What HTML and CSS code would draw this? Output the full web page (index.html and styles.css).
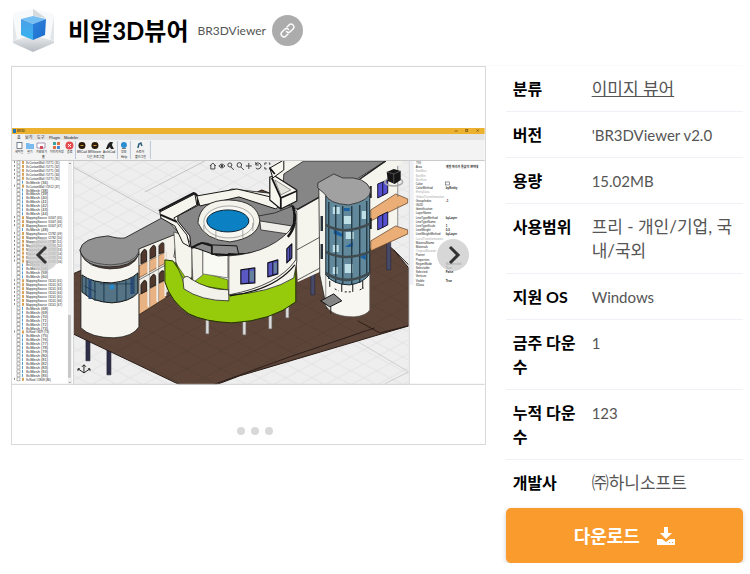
FILE: index.html
```html
<!DOCTYPE html>
<html lang="ko">

<head>
    <meta charset="UTF-8" />
    <meta name="viewport" content="width=device-width, initial-scale=1.0" />
    <title>비알3D뷰어</title>
    <link rel="stylesheet" href="styles.css">
</head>

<body>
    <header class="app-header">
        <svg class="app-icon" viewBox="0 0 44 44" aria-hidden="true">
            <defs>
                <linearGradient id="cubeLeft" x1="0" y1="0" x2="0" y2="1">
                    <stop offset="0" stop-color="#4b9fe8" />
                    <stop offset="1" stop-color="#36b4f0" />
                </linearGradient>
                <linearGradient id="cubeRight" x1="0" y1="0" x2="1" y2="1">
                    <stop offset="0" stop-color="#2e83dd" />
                    <stop offset="1" stop-color="#1b6ccb" />
                </linearGradient>
                <linearGradient id="base" x1="0" y1="0" x2="0" y2="1">
                    <stop offset="0" stop-color="#eceff1" />
                    <stop offset="1" stop-color="#b4bac0" />
                </linearGradient>
            </defs>
            <path d="M1 4 21 0v28L1 32zM21 0l21 5v27L21 27z" fill="#f8f9fa" />
            <path d="M21 0v7l13 2z" fill="#d5dadf" />
            <path d="M1 9v23l4-2zM42 8v24l-4-2z" fill="#e3e6e9" />
            <path d="M1 32 21 26l21 6v2L21 43 1 34z" fill="url(#base)" />
            <path d="M9 10 21 7l13 3-13 5z" fill="#75bff3" />
            <path d="M9 10l12 5v16L9 26z" fill="url(#cubeLeft)" />
            <path d="M34 10 21 15v16l12-5z" fill="url(#cubeRight)" />
        </svg>
        <h1>비알3D뷰어</h1>
        <span class="app-subtitle">BR3DViewer</span>
        <a class="link-button" href="#" aria-label="링크">
            <svg viewBox="0 0 24 24" aria-hidden="true">
                <g transform="rotate(-45 12 12)">
                    <path d="M9 16H5a4 4 0 0 1 0-8h5a4 4 0 0 1 4 4" />
                    <path d="M15 8h4a4 4 0 0 1 0 8h-5a4 4 0 0 1-4-4" />
                </g>
            </svg>
        </a>
    </header>

    <main class="content">
        <div class="slider">
            <svg class="slide" viewBox="12 128 473 257" role="img" aria-label="BR3DViewer 화면">
                <defs>
                    <pattern id="grid" width="26" height="14" patternUnits="userSpaceOnUse">
                        <path d="M0 0 26 14M0 14 26 0" stroke="#dcdcdc" stroke-width=".6" />
                    </pattern>
                    <pattern id="groundGrid" width="34" height="18" patternUnits="userSpaceOnUse">
                        <path d="M0 0 34 18M0 18 34 0" stroke="#4c3a31" stroke-width=".5" />
                    </pattern>
                    <clipPath id="viewport">
                        <rect x="73" y="161" width="336" height="224" />
                    </clipPath>
                </defs>

                <!-- window -->
                <rect x="12" y="128" width="473" height="257" fill="#fff" />
                <rect x="12" y="128" width="473" height="6" fill="#ebb12f" />
                <rect x="13" y="129" width="3" height="4" fill="#2277b5" />
                <text x="17" y="132">BR3D</text>
                <path d="M455 131h3M466 129.500h2v2h-2zM477 129.500l2 2m0-2-2 2" stroke="#5b4413" stroke-width=".7" fill="none" />
                <rect x="12" y="134" width="473" height="6" fill="#e4e4e4" />
                <rect x="12" y="140" width="473" height="21" fill="#f3f3f3" />
                <rect x="12" y="134" width="13" height="7" fill="#f3f3f3" />
                <path d="M12 160.500h473" stroke="#c9c9c9" />
                <g>
                    <text class="menu" x="17" y="139">홈</text>
                    <text class="menu" x="25" y="139">보기</text>
                    <text class="menu" x="37" y="139">도구</text>
                    <text class="menu" x="49" y="139">Plugin</text>
                    <text class="menu" x="64" y="139">Modeler</text>
                    <text x="15" y="153">새파일</text>
                    <text x="27" y="153">열기</text>
                    <text x="36" y="153">가져오기</text>
                    <text x="50" y="153">이미지저장</text>
                    <text x="67" y="153">종료</text>
                    <text x="77" y="153">BRCad</text>
                    <text x="88" y="153">BRViewer</text>
                    <text x="103" y="153">ArchiCad</text>
                    <text x="121" y="153">정보</text>
                    <text x="136" y="153">스토어</text>
                    <text x="42" y="158">홈</text>
                    <text x="87" y="158">다른 프로그램</text>
                    <text x="121" y="158">Help</text>
                    <text x="135" y="158">플러그인</text>
                </g>
                <path d="M75.500 141v18M117.500 141v18M130.500 141v18M150.500 141v18" stroke="#b9c6da" />
                <rect x="17" y="142.500" width="5" height="6" fill="#fff" stroke="#586678" stroke-width=".8" />
                <path d="M26 143h3l1 1h4v5h-8z" fill="#79baf0" />
                <path d="M37 143h8v5h-8z" fill="#fff" stroke="#947aa0" stroke-width=".8" />
                <path d="M40 146h3v3h-3z" fill="#d04e5d" />
                <path d="M53 142h3v3h-3z" fill="#35a3a1" />
                <path d="M57 142h3v3h-3zM53 146h3v3h-3z" fill="#dd703e" />
                <path d="M57 146h3v3h-3z" fill="#4988d0" />
                <circle cx="69.500" cy="145.500" r="4" fill="#e4494d" />
                <path d="M68 144l3 3m0-3-3 3" stroke="#fff" />
                <circle cx="82" cy="145.500" r="3.500" fill="#2b1b0a" />
                <circle cx="95" cy="145.500" r="3.500" fill="#2b1b0a" />
                <path d="M80.500 145.500h3M93.500 145.500h3" stroke="#d79c44" />
                <path d="M106 149l2-5 2-2h3l-1 3 2 4h-3l-1-2-2 2z" fill="#222" />
                <circle cx="124" cy="145" r="3" fill="#2b8ed0" />
                <path d="M122 148.500h4" stroke="#777" />
                <path d="M138 148l1-4 2-1 1 3" fill="none" stroke="#2c5d77" stroke-width="1.500" />

                <!-- tree and property panes, filled by panes.js -->
                <g id="tree"></g>
                <rect x="68" y="161" width="4" height="223" fill="#f0f0f0" />
                <rect x="68" y="315" width="3" height="63" fill="#c8c8c8" />
                <path d="M69 164l1-1 1 1M69 382l1 1 1-1" stroke="#555" stroke-width=".6" fill="none" />
                <rect x="409" y="161" width="5" height="124" fill="#eef0f6" />
                <g id="props"></g>

                <!-- 3d viewport -->
                <g clip-path="url(#viewport)" stroke-linejoin="round">
                    <rect x="73" y="161" width="336" height="224" fill="#eee" />
                    <rect x="73" y="161" width="336" height="224" fill="url(#grid)" />
                    <path d="M73 167 160 215M145 192 205 161" stroke="#aaa" stroke-width=".6" />
                    <path d="M355 340 409 372M385 384 409 372" stroke="#bbb" stroke-width=".6" />

                    <!-- ground -->
                    <path d="M86 334h4v27h-4zM107 346h4v29h-4z" fill="#2e2e49" stroke="#1b1b2a" stroke-width=".6" />
                    <path d="M73 274 150 240 262 190 380 238 394 250 409 268V326L240 376 216 385H180L73 334z" fill="#5c4438" stroke="#251914" />
                    <path d="M73 274 150 240 262 190 380 238 394 250 409 268V326L240 376 216 385H180L73 334z" fill="url(#groundGrid)" />
                    <path d="M213 385 290 357 375 328M358 321 380 333 409 326" fill="none" stroke="#231713" stroke-width=".8" />
                    <path d="M394 250 409 265" stroke="#231713" />
                    <path d="M311 273h4v22h-4zM387 235h4v35h-4z" fill="#474a69" stroke="#25263c" stroke-width=".6" />

                    <!-- rear wing -->
                    <path d="M270 167 284 157H409L398 166V233L368 250 298 282 293 208z" fill="#f6f5ed" />
                    <path d="M298 280 326 265M297 250 326 234" stroke="#333" stroke-width=".8" />
                    <path d="M284 174 304 161H386L354 181 320 197 298 209 282 205z" fill="#868686" stroke="#222" stroke-width=".8" />
                    <path d="M386 161 356 182M320 197 297 210" stroke="#222" stroke-width="1.500" />
                    <path d="M371 210 396 194 408 199V203L371 221z" fill="#eaae76" stroke="#5b3b22" stroke-width=".7" />
                    <path d="M371 241 396 226 408 230V234L371 251z" fill="#eaae76" stroke="#5b3b22" stroke-width=".7" />
                    <path d="M398 166V197M398 206V227" stroke="#777" stroke-width=".8" />
                    <path d="M378 184l10-4v13l-10 5zM378 217l10-5v13l-10 5z" fill="#5550cf" stroke="#15152d" />
                    <path d="M383 182v14M383 214v14" stroke="#15152d" />
                    <path d="M371 186v12M371 218v11" stroke="#222" stroke-width="2" />

                    <!-- arcade -->
                    <path d="M139 246 176 228V285L139 315z" fill="#f3f1e9" />
                    <path d="M139 266 166 252V263L139 278zM139 295 166 280V298L139 315z" fill="#e9b282" stroke="#5b3b22" stroke-width=".6" />
                    <path d="M141 264v-10q4-8 6-2v9zM150 259v-9q4-8 6-2v8zM159 254v-8q4-6 6-1v7zM141 294v-9q4-8 6-2v8zM150 288v-9q4-8 6-2v8zM159 283v-9q4-6 6-1v7z" fill="#52382c" stroke="#111" stroke-width=".8" />
                    <path d="M148.500 250v57M157.500 246v56M165.500 240v56" stroke="#efeee8" stroke-width="2" />
                    <path d="M149.800 250v57M158.800 246v56" stroke="#777" stroke-width=".5" />
                    <path d="M139 280 166 265M139 315 172 294" stroke="#222" stroke-width=".6" />

                    <!-- gray walkway and left tower -->
                    <path d="M80 250Q82 238 108 236 119 239 125 238L162 218 177 227 179 233 139 249V255Q131 267 110 267 83 267 80 250z" fill="#929292" stroke="#222" stroke-width=".9" />
                    <path d="M81 254V328Q91 338 114 338 133 337 139 327V254Q134 269 110 269 87 268 81 254z" fill="#f6f5ef" stroke="#222" stroke-width=".8" />
                    <path d="M82 275Q92 283 112 283 130 281 138 273V293Q130 302 112 303 92 302 82 292z" fill="#547486" stroke="#111" />
                    <path d="M86 278v17M95 281v20M104 283v19M117 283v19M126 281v19M134 276v18" stroke="#1b354b" stroke-width="1" />
                    <path d="M90 279v20M132 278v16" stroke="#294b79" stroke-width="3" />
                    <path d="M100 284h32M84 286l12 6" stroke="#182c38" stroke-width=".6" />
                    <circle cx="112" cy="287" r="2.500" fill="#2388cc" />
                    <path d="M80 250Q83 264 111 265 134 264 139 252" fill="none" stroke="#333" stroke-width=".7" />

                    <!-- main round building -->
                    <path d="M206 320h3v14h-3zM243 320h3v15h-3zM269 315h3v14h-3zM286 304h3v14h-3z" fill="#ddd" stroke="#777" stroke-width=".5" />
                    <path d="M165 260 173 261 184 277 228 287 262 281 296 266V302Q272 321 232 323 205 322 189 314 171 302 165 282z" fill="#96cb0b" stroke="#223300" />
                    <path d="M160 212 196 193 201 203 232 189 285 195 297 212V262L294 278Q270 293 230 295L174 257 178 232z" fill="#f6f5ed" stroke="#222" stroke-width=".8" />
                    <path d="M174 232 186 236 192 245V277L184 283 176 262z" fill="#f6f5ed" stroke="#333" stroke-width=".7" />
                    <path d="M175 262 183 278 192 282 201 272 228 280V290L190 284z" fill="#96cb0b" stroke="#223300" stroke-width=".6" />
                    <path d="M192 249 203 244V275L193 283z" fill="#f4f3eb" stroke="#444" stroke-width=".7" />
                    <path d="M203 245 228 250V278L203 274z" fill="#fafaf5" stroke="#555" stroke-width=".7" />
                    <path d="M183 279Q187 274 191 279 208 290 229 290V301Q201 301 184 289z" fill="#f3f2ea" stroke="#222" stroke-width=".8" />
                    <path d="M178 216 199 205 230 195 279 205 293 206Q297 226 287 236 271 250 246 254 225 255 206 250L191 247 190 236 178 221z" fill="#868686" stroke="#111" />
                    <path d="M160 212 195 194 197 205 174 218 176 221 187 235 190 247 183 243 175 226 161 218z" fill="#f6f5ed" stroke="#171717" stroke-width="1" />
                    <path d="M159 211 194 193 198 196V205M161 215 177 222" fill="none" stroke="#171717" stroke-width="2" />
                    <path d="M197 196 237 189 275 198 283 202 276 209 239 197 200 206z" fill="#f6f5ed" stroke="#171717" stroke-width="1" />
                    <path d="M193 247Q202 240 212 245L237 246 239 255 218 256z" fill="#8c8c8c" stroke="#111" />
                    <path d="M191 248 202 243 212 246V254L228 255M228 254Q264 257 289 237" fill="none" stroke="#171717" stroke-width="1.800" />
                    <path d="M198 223Q200 200 229 200 258 201 260 221 258 238 230 242 205 240 198 223z" fill="#f4f3eb" stroke="#222" stroke-width=".9" />
                    <ellipse cx="229" cy="222" rx="25" ry="16" fill="#f8f7f1" stroke="#777" stroke-width=".6" />
                    <ellipse cx="228" cy="221" rx="21" ry="11" fill="#0b80c2" stroke="#0a2434" />
                    <path d="M204 225v8M216 231v9M243 230v8M253 223v8" stroke="#888" stroke-width=".7" />
                    <path d="M260 221 292 226 288 234 261 230z" fill="#efeee8" stroke="#222" stroke-width=".8" />
                    <path d="M259 216 275 213 293 206" fill="none" stroke="#222" stroke-width=".8" />
                    <path d="M229 256Q275 253 296 223V260Q278 286 229 295z" fill="#f6f5ed" stroke="#222" stroke-width=".8" />
                    <path d="M293 206Q299 224 288 237" fill="none" stroke="#171717" stroke-width="2.500" />
                    <path d="M270 177 275 176 297 190V201L281 209 270 200z" fill="#f7f6ef" stroke="#151515" stroke-width="1.200" />
                    <path d="M275 180 291 190 281 195z" fill="#e6e5dd" stroke="#555" stroke-width=".6" />
                    <path d="M270 168 284 160V170L273 178z" fill="#f7f6ef" stroke="#151515" />
                    <path d="M270 168 275 174M272 178 281 198 297 191M281 198V209" fill="none" stroke="#151515" stroke-width="1.800" />
                    <path d="M241 270l14-2v15l-14 1zM268 263l10-3v14l-10 3zM287 249l5-5v14l-5 5z" fill="#5a58c2" stroke="#11111e" stroke-width="1.200" />
                    <path d="M249 269v15M273 262v14M290 246v15" stroke="#11111e" />
                    <path d="M250 271h4v10h-4zM274 263h3v10h-3z" fill="#65849c" />
                    <path d="M230 296Q275 290 295 265" fill="none" stroke="#111" stroke-width="1.200" />

                    <!-- glass stair tower -->
                    <path d="M319 183 327 187V309L320 275z" fill="#f4f3eb" stroke="#222" stroke-width=".8" />
                    <path d="M322 216v15M322 244v15" stroke="#273238" stroke-width="2.500" />
                    <path d="M326 274V306Q333 317 354 317 367 316 370 310V270z" fill="#f7f6f0" stroke="#555" stroke-width=".6" />
                    <path d="M326 196V275Q334 285 350 285 364 283 370 274V194z" fill="#62889c" stroke="#17252c" />
                    <path d="M333 207h7v7h-7zM344 216h8v8h-8zM346 232h8v7h-8zM333 245h6v7h-6zM345 264h8v9h-8zM362 211h5v8h-5zM333 267h5v7h-5z" fill="#bfdfe7" />
                    <path d="M334 229l9 5v3l-9-3zM345 247l8-5v5zM360 257l6-3v6zM344 208h6v3h-6z" fill="#1b61a2" />
                    <path d="M329 202v77M336 205v78M343 206v78M352 206v78M360 205v78M367 201v75" stroke="#1f343e" stroke-width="1.300" />
                    <path d="M326 225Q344 236 370 224M326 252Q345 262 370 252M326 273Q346 287 370 273" fill="none" stroke="#404b50" stroke-width="2.500" />
                    <path d="M342 284v8M353 284v8M363 281v8M330 281v6" stroke="#111" />
                    <path d="M335 289l4 2M345 292h8M360 290l4-2" stroke="#111" stroke-dasharray="2 2" />
                    <path d="M318 183 334 174 343 178Q366 176 371 190 371 201 349 205 329 204 325 194L318 188z" fill="#a1a1a1" stroke="#333" stroke-width=".9" />
                    <path d="M321 301 334 294 342 301 330 307z" fill="#858585" stroke="#111" />
                    <path d="M331 307v7" stroke="#222" />

                    <!-- view cube -->
                    <ellipse cx="394" cy="182" rx="9" ry="4" fill="none" stroke="#aaa" stroke-width="1.500" />
                    <path d="M387 172 394 169 401 171V180L395 184 388 181z" fill="#151515" />
                    <path d="M387 172 394 174 401 171M394 174V184" fill="none" stroke="#777" stroke-width=".6" />

                    <!-- viewport tools -->
                    <g fill="none" stroke="#333" stroke-width=".9">
                        <path d="M210 166 213 163 216 166M211 165v4h4v-4M219 166q3-4 6 0-3 4-6 0z" />
                        <circle cx="222" cy="166" r="1" fill="#333" />
                        <circle cx="230" cy="165" r="2" />
                        <circle cx="239.500" cy="165" r="2.300" />
                        <path d="M231 167l3 3M241 167l3 3M246 166h6M249 163v6M256 164a3 3 0 1 1 0 4M256 162v3h3" />
                        <path d="M265 165v-2h2M269 163h1v2M265 167v2h2M270 167v2h-1" />
                    </g>

                    <!-- axis -->
                    <path d="M84 373V365M84 373 78 369M84 373 90 369M82 367l2-2 2 2M78 371v-2h2M90 371v-2h-2" fill="none" stroke="#222" />
                </g>
                <path d="M73.500 161v224M409.500 161v224M12 384.500h473" stroke="#d2d2d2" fill="none" />
            </svg>
            <button class="arrow prev" aria-label="이전">
                <svg viewBox="0 0 32 32"><path d="M19 8 11 16l8 8" /></svg>
            </button>
            <button class="arrow next" aria-label="다음">
                <svg viewBox="0 0 32 32"><path d="M13 8l8 8-8 8" /></svg>
            </button>
            <div class="dots">
                <span></span><span></span><span></span>
            </div>
        </div>

        <aside class="info">
            <table>
                <tr><th scope="row">분류</th><td><a href="#">이미지 뷰어</a></td></tr>
                <tr><th scope="row">버전</th><td class="latin">'BR3DViewer v2.0</td></tr>
                <tr><th scope="row">용량</th><td class="latin">15.02MB</td></tr>
                <tr><th scope="row">사용범위</th><td>프리 - 개인/기업, 국내/국외</td></tr>
                <tr><th scope="row">지원 OS</th><td class="latin">Windows</td></tr>
                <tr><th scope="row">금주 다운수</th><td class="latin">1</td></tr>
                <tr><th scope="row">누적 다운수</th><td class="latin">123</td></tr>
                <tr><th scope="row">개발사</th><td>㈜하니소프트</td></tr>
            </table>
            <button class="download">
                다운로드
                <svg viewBox="0 0 18 18" aria-hidden="true">
                    <path d="M7 0h4v6h4L9 12 3 6h4z" />
                    <path d="M0 12h5l4 3 4-3h5v6H0z" />
                    <path class="led" d="M12 15.500h1M15 15.500h1" />
                </svg>
            </button>
        </aside>
    </main>

    <script src="panes.js"></script>
</body>

</html>
```
FILE: styles.css
```css
* {
    box-sizing: border-box;
}

body {
    font-family: Lato, "Noto Sans CJK KR", sans-serif;
    font-size: 16px;
    line-height: 24px;
    margin: 0;
    padding: 0 7px 0 11px;
    background-color: #fff;
    color: #555;
}

.app-header {
    display: flex;
    align-items: center;
    height: 66px;
    padding-bottom: 4px;
    border-bottom: 1px solid #fafafa;
}

.app-icon {
    width: 44px;
    height: 44px;
    margin: 0 12px 0 1px;
}

.app-header h1 {
    margin: 0;
    font-size: 24px;
    line-height: 36px;
    color: #000;
}

.app-subtitle {
    margin: 0 6px 0 9px;
    font-size: 12px;
}

.link-button {
    display: flex;
    align-items: center;
    justify-content: center;
    width: 31px;
    height: 31px;
    border-radius: 50%;
    background-color: #acacac;
}

.link-button svg {
    width: 17px;
    height: 17px;
    fill: none;
    stroke: #fff;
    stroke-width: 2;
    stroke-linecap: round;
}

.content {
    display: grid;
    grid-template-columns: 2fr 1fr;
    gap: 20px;
    align-items: start;
}

/* Slider */
.slider {
    position: relative;
    padding: 61px 0 59px;
    border: 1px solid #d9d9d9;
}

.slide {
    display: block;
    width: 100%;
    height: auto;
}

.slide text {
    font-family: "Liberation Sans", "Noto Sans CJK KR", sans-serif;
    font-size: 3px;
    fill: #222;
}

.slide .menu,
.slide .mesh {
    font-size: 4px;
}

.slide .muted {
    fill: #aaa;
}

.slide .value {
    font-weight: bold;
}

.arrow {
    position: absolute;
    top: 50%;
    width: 32px;
    height: 32px;
    margin-top: -16px;
    padding: 0;
    border: 0;
    border-radius: 50%;
    background-color: rgba(205, 205, 205, 0.8);
    cursor: pointer;
}

.arrow svg {
    display: block;
    fill: none;
    stroke: #333;
    stroke-width: 3;
}

.prev {
    left: 15px;
}

.next {
    right: 16px;
}

.dots {
    position: absolute;
    right: 0;
    bottom: 9px;
    left: 0;
    display: flex;
    justify-content: center;
    gap: 6px;
    padding-left: 14px;
}

.dots span {
    width: 8px;
    height: 8px;
    border-radius: 50%;
    background-color: #d8d8d8;
}

/* Info table */
.info table {
    width: 100%;
    margin-bottom: 3px;
    border-collapse: separate;
    border-spacing: 0;
    table-layout: fixed;
}

.info th,
.info td {
    padding: 11px 7px 10px;
    border-bottom: 1px solid #f0f0f6;
    text-align: left;
    vertical-align: top;
}

.info th {
    width: 79px;
    padding-right: 0;
    color: #000;
}

.info td {
    font-size: 17px;
}

.info .latin {
    font-size: 15px;
}

.info tr:last-child > * {
    border-bottom: 0;
}

.info a {
    color: #555;
}

.download {
    display: flex;
    align-items: center;
    justify-content: center;
    gap: 17px;
    width: 100%;
    height: 55px;
    border: 0;
    border-radius: 5px;
    background-color: #f99b2d;
    box-shadow: 0 2px 5px rgba(0, 0, 0, 0.2);
    color: #fff;
    font: inherit;
    font-size: 18px;
    font-weight: bold;
    cursor: pointer;
}

.download svg {
    width: 18px;
    height: 18px;
    fill: #fff;
}

.download .led {
    stroke: #f99b2d;
}
```
FILE: panes.js
```js
const SVG_NS = 'http://www.w3.org/2000/svg';

// [label, number of rows]
const treeGroups = [
    ['IfcCurtainWall #5771', 5],
    ['IfcMesh', 1],
    ['IfcCurtainWall #5912', 1],
    ['IfcMesh', 7],
    ['MappingSource #0347', 3],
    ['IfcMesh', 1],
    ['MappingSource #2782', 8],
    ['IfcMesh', 4],
    ['MappingSource #3241', 7],
    ['IfcMesh', 6],
    ['IfcRoof #829', 1],
    ['IfcMesh', 11],
    ['IfcRoof #1808', 1]
];

const properties = [
    ['기타', ''], ['Area', '개별 파라가 통합적 면이데'], ['BoxMax', ''], ['BoxMin', ''], ['BoxSize', ''],
    ['Color', ''], ['ColorMethod', 'byEntity'], ['EntityData', ''], ['GlobalTransformation', ''],
    ['GroupIndex', '-1'], ['GUID', ''], ['Identification', ''], ['LayerName', ''],
    ['LineTypeMethod', 'byLayer'], ['LineTypeName', ''], ['LineTypeScale', '1'], ['LineWeight', '0.5'],
    ['LineWeightMethod', 'byLayer'], ['LocalTransformation', ''], ['MaterialName', ''], ['Materials', ''],
    ['OriginalBounds', ''], ['Parent', ''], ['Properties', ''], ['RegenMode', 'NotNeeded'],
    ['Selectable', 'True'], ['Selected', 'False'], ['Vertices', ''], ['Visible', 'True'], ['XData', '']
];

const muted = ['BoxMax', 'BoxMin', 'BoxSize', 'EntityData', 'GlobalTransformation', 'LocalTransformation', 'OriginalBounds'];

function add(parent, name, attrs, text) {
    const el = document.createElementNS(SVG_NS, name);
    for (const key in attrs) el.setAttribute(key, attrs[key]);
    if (text) el.textContent = text;
    parent.appendChild(el);
}

const tree = document.getElementById('tree');
const treeStep = 217 / 55;
let row = 0;
treeGroups.forEach(([label, count]) => {
    for (let i = 0; i < count; i++) {
        const y = 162 + row * treeStep;
        const leaf = label === 'IfcMesh';
        if (!leaf) add(tree, 'rect', { x: 14, y: y - 1, width: 1, height: 2, fill: '#888' });
        add(tree, 'rect', { x: 17, y: y - 1, width: 3, height: 3, fill: '#fff', stroke: '#888', 'stroke-width': 0.6 });
        add(tree, 'rect', { x: 22, y: y - 1, width: leaf ? 1 : 2, height: 3, fill: leaf ? '#4f9bd5' : '#d9a25c' });
        add(tree, 'text', { x: 26, y: y + 2, class: leaf ? 'mesh' : 'source' }, `${label} (${row + 31})`);
        row++;
    }
});

const props = document.getElementById('props');
const propStep = 122 / 29;
properties.forEach(([name, value], i) => {
    const y = 164 + i * propStep;
    add(props, 'text', { x: 416, y, class: muted.includes(name) ? 'muted' : 'name' }, name);
    if (value) add(props, 'text', { x: 446, y, class: 'value' }, value);
});
add(props, 'rect', { x: 446, y: 182, width: 4, height: 3, fill: '#fff', stroke: '#555', 'stroke-width': 0.6 });
```
